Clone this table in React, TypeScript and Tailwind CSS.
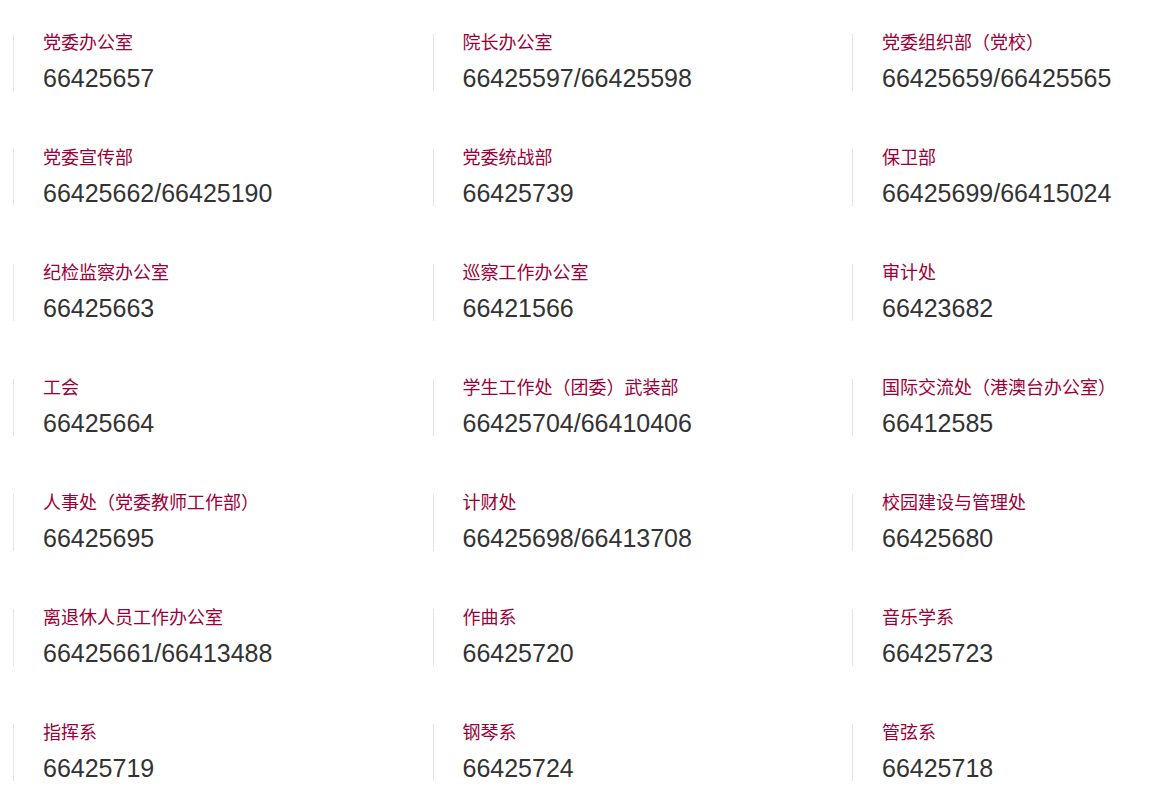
import React from 'react';

const contacts = [
  { name: '党委办公室', tel: '66425657' },
  { name: '院长办公室', tel: '66425597/66425598' },
  { name: '党委组织部（党校）', tel: '66425659/66425565' },
  { name: '党委宣传部', tel: '66425662/66425190' },
  { name: '党委统战部', tel: '66425739' },
  { name: '保卫部', tel: '66425699/66415024' },
  { name: '纪检监察办公室', tel: '66425663' },
  { name: '巡察工作办公室', tel: '66421566' },
  { name: '审计处', tel: '66423682' },
  { name: '工会', tel: '66425664' },
  { name: '学生工作处（团委）武装部', tel: '66425704/66410406' },
  { name: '国际交流处（港澳台办公室）', tel: '66412585' },
  { name: '人事处（党委教师工作部）', tel: '66425695' },
  { name: '计财处', tel: '66425698/66413708' },
  { name: '校园建设与管理处', tel: '66425680' },
  { name: '离退休人员工作办公室', tel: '66425661/66413488' },
  { name: '作曲系', tel: '66425720' },
  { name: '音乐学系', tel: '66425723' },
  { name: '指挥系', tel: '66425719' },
  { name: '钢琴系', tel: '66425724' },
  { name: '管弦系', tel: '66425718' },
];

const App: React.FC = () => {
  return (
    <div className="min-h-[808px] w-[1151px] overflow-hidden bg-white pl-[13px] pt-[34px] font-['Liberation_Sans','Noto_Sans_CJK_SC',sans-serif]">
      <ul className="grid grid-cols-[repeat(3,419.5px)] gap-y-[58px]">
        {contacts.map((c, i) => (
          <li key={i} className="border-l border-[#e3e3e3] pl-[29px]">
            <p className="whitespace-nowrap text-[18px] leading-[18px] text-[#9c0038]">{c.name}</p>
            <p className="mt-[13px] whitespace-nowrap text-[25px] leading-[26px] text-[#333333]">{c.tel}</p>
          </li>
        ))}
      </ul>
    </div>
  );
};

export default App;
